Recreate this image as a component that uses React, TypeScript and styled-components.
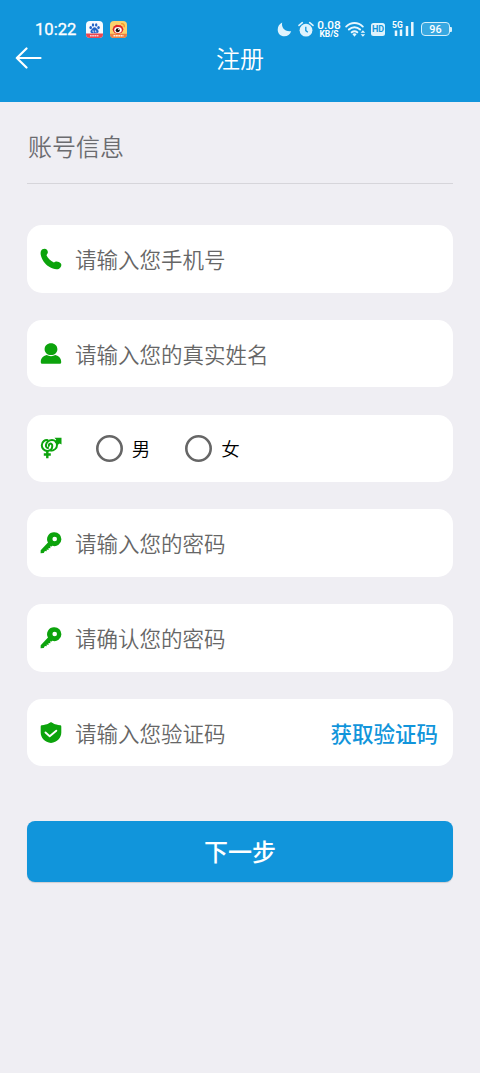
import React from "react";
import styled, { createGlobalStyle } from "styled-components";

const BLUE = "#1195db";
const GREEN = "#0ca30c";

const GlobalStyle = createGlobalStyle`
  * { box-sizing: border-box; }
  body {
    margin: 0;
    background: #efeef3;
    font-family: "Noto Sans CJK SC", sans-serif;
  }
`;

const Page = styled.div`
  min-height: 1073px;
  background: #efeef3;
`;

const Header = styled.header`
  height: 102px;
  padding-top: 18px;
  background: ${BLUE};
  color: #fff;
`;

const StatusBar = styled.div`
  display: flex;
  align-items: center;
  height: 22px;
  padding: 0 28.5px 0 35px;
`;

const Clock = styled.span`
  width: 51px;
  padding-top: 1px;
  font: 400 16.6px/23px Roboto, sans-serif;
  -webkit-text-stroke: 0.3px #fff;
  white-space: nowrap;
`;

const StatusIcon = styled.svg<{ $gap?: number }>`
  display: block;
  flex: none;
  margin-left: ${(p) => p.$gap ?? 0}px;
`;

const Spacer = styled.div`
  flex: 1;
`;

const Speed = styled.div`
  display: flex;
  flex-direction: column;
  align-items: center;
  width: 24px;
  margin-left: 3px;
  font-family: Roboto, sans-serif;
  white-space: nowrap;
  font-weight: 500;
`;

const SpeedValue = styled.span`
  margin-top: -1px;
  font-size: 11.8px;
  line-height: 12px;
`;

const SpeedUnit = styled.span`
  margin-top: -1px;
  font-size: 8.5px;
  line-height: 9px;
  font-weight: 700;
`;

const HdBadge = styled.span`
  width: 14px;
  height: 13px;
  margin-left: 5px;
  border-radius: 2.5px;
  background: #def2fc;
  color: ${BLUE};
  font: 700 9px/13px Roboto, sans-serif;
  text-align: center;
`;

const Signal = styled.div`
  display: flex;
  align-items: flex-start;
  width: 22px;
  height: 18px;
  margin-left: 7px;
`;

const SignalLabel = styled.span`
  width: 11px;
  font: 700 8.5px/10px Roboto, sans-serif;
`;

const Bars = styled.svg`
  display: block;
  flex: none;
  margin-left: -10px;
`;

const Battery = styled.div`
  display: flex;
  align-items: center;
  margin-left: 7px;
`;

const BatteryBody = styled.span`
  width: 29px;
  height: 14px;
  border: 1px solid #d5effb;
  border-radius: 4px;
  background: #38a8e1;
  font: 500 10.8px/13px Roboto, sans-serif;
  text-align: center;
`;

const BatteryTip = styled.span`
  width: 1.5px;
  height: 5px;
  background: #d5effb;
  border-radius: 0 1px 1px 0;
`;

const NavBar = styled.div`
  display: grid;
  grid-template-columns: 60px 1fr 60px;
  align-items: center;
  height: 36px;
`;

const BackButton = styled.button`
  padding: 0 0 0 15px;
  border: 0;
  background: none;
  height: 36px;
`;

const Title = styled.h1`
  margin: 0;
  font-size: 24px;
  line-height: 36px;
  font-weight: 350;
  text-align: center;
`;

const Content = styled.main`
  padding: 0 27px;
`;

const SectionTitle = styled.h2`
  height: 82px;
  margin: 0 0 41px;
  padding: 26px 0 0 1px;
  border-bottom: 1.5px solid #d6d5da;
  color: #6b6b6f;
  font-size: 24px;
  line-height: 36px;
  font-weight: 350;
`;

const Form = styled.div`
  display: flex;
  flex-direction: column;
  gap: 27.3px;
`;

const Field = styled.div`
  display: flex;
  align-items: center;
  height: 67.5px;
  padding: 0 15px 0 13px;
  border-radius: 15px;
  background: #fff;
`;

const FieldIcon = styled.svg`
  display: block;
  flex: none;
  width: 22px;
  height: 22px;
  margin-right: 13px;
`;

const Hint = styled.span`
  flex: 1;
  color: #666;
  font-size: 21.5px;
  line-height: 32px;
  font-weight: 350;
  white-space: nowrap;
`;

const CodeLink = styled.span`
  color: ${BLUE};
  font-size: 21.5px;
  line-height: 32px;
  font-weight: 500;
  white-space: nowrap;
`;

const RadioOption = styled.label`
  display: flex;
  align-items: center;
  gap: 9px;
  width: 89.5px;
  color: #000;
  font-size: 18.5px;
  line-height: 28px;
  font-weight: 350;
`;

const RadioGroup = styled.div`
  display: flex;
  padding-left: 20.8px;
`;

const RadioRing = styled.svg`
  display: block;
  width: 27px;
  height: 27px;
`;

const NextButton = styled.button`
  display: block;
  width: 100%;
  height: 61px;
  margin-top: 54.5px;
  padding: 0;
  border: 0;
  border-radius: 8px;
  background: ${BLUE};
  box-shadow: 0 1px 1px rgba(0, 0, 0, 0.14);
  color: #fff;
  font: 500 24px/36px "Noto Sans CJK SC", sans-serif;
`;

const PhoneIcon = () => (
  <FieldIcon viewBox="0 0 22 22">
    <path
      fill={GREEN}
      d="M1 3C1.800 .700 5.300 -.100 6.900 1.700C8.100 3.100 8.200 4.900 7.100 6.100L6.500 7.200C7.600 9.900 10.300 12.700 13.900 14.400L15.200 13.700C17 12.900 19.600 14 20.900 15.500C22.100 17.300 20.700 19.900 18.600 20.900C16.200 21.900 12.300 20.800 9.200 18.800C4.800 15.900 1.500 11.300 .7 6.400C.5 5.100 .6 4 1 3Z"
    />
  </FieldIcon>
);

const PersonIcon = () => (
  <FieldIcon viewBox="0 0 22 22">
    <path
      fill={GREEN}
      d="M11 .3C14.700 .3 17.400 2.900 17.400 6.200C17.400 9.500 14.600 12.100 11 12.100S4.600 9.500 4.600 6.200C4.600 2.900 7.300 .3 11 .3ZM6.600 12.100C9.300 13.500 12.700 13.500 15.400 12.100C19 13.200 21.300 15.700 21.200 18.900C21.200 20.300 20.600 20.800 19.200 20.800H2.800C1.400 20.800 .8 20.300 .8 18.900C.7 15.700 3 13.200 6.600 12.100Z"
    />
  </FieldIcon>
);

const GenderIcon = () => (
  <FieldIcon viewBox="0 0 22 22" fill="none" stroke={GREEN} strokeWidth="2">
    <path d="M8.200 3.300C5 2.300 1.800 4.800 1.800 8.300C1.800 11.500 4.300 13.900 7.300 13.900C10 13.900 12.200 12 12.300 9.100C12.400 7.300 11 6.100 9.700 6.900C8.700 7.500 8.600 8.900 9.300 9.700" />
    <path d="M10.300 13.800C14.200 13.600 17 11.200 17 7.900C17 5 14.800 3.100 12 3.100C8.900 3.100 6.200 5.400 5.900 8.300C5.800 10.200 7.300 11.500 8.900 10.700" />
    <path d="M7.300 13.800V21.200M3.800 17.500H10.800" strokeWidth="2.400" />
    <path d="M14.500 .7H21.500V7.500L19.700 6.400L17.500 8L14.500 4.900L16.200 2.800Z" fill={GREEN} stroke="none" />
  </FieldIcon>
);

const KeyIcon = () => (
  <FieldIcon viewBox="0 0 22 22">
    <path
      fill={GREEN}
      fillRule="evenodd"
      d="M14.500 .3A6.900 6.900 0 0 1 21.400 7.200A6.900 6.900 0 0 1 12.400 13.800L11.700 14.600L10.200 14.300L10.400 16.200L8.500 16L8.600 17.900L6.700 17.600L6.700 19.200L4.900 19L3.700 20.900L.6 21.200L.7 18.300L8 10.600A6.900 6.900 0 0 1 14.500 .3ZM14.700 4.700A2.300 2.300 0 1 0 14.700 9.300A2.300 2.300 0 1 0 14.700 4.700Z"
    />
  </FieldIcon>
);

const ShieldIcon = () => (
  <FieldIcon viewBox="0 0 22 22">
    <path
      fill={GREEN}
      d="M11 .3C12 .3 14.500 3 20.200 3.200Q21.300 3.300 21.300 4.500V10.500C21.300 16 17.200 20 11 21.100C4.800 20 .7 16 .7 10.500V4.500Q.7 3.300 1.800 3.200C7.500 3 10 .3 11 .3Z"
    />
    <path fill="none" stroke="#fff" strokeWidth="1.900" strokeLinecap="round" strokeLinejoin="round" d="M5.500 10.500L9.700 14.200L16.300 8.700" />
  </FieldIcon>
);

const BaiduIcon = () => (
  <StatusIcon width="17" height="17" viewBox="0 0 17 17">
    <rect width="17" height="17" rx="4" fill="#f7fbff" />
    <g fill="#2465c8">
      <ellipse cx="4.700" cy="6.600" rx="1.300" ry="1.700" />
      <ellipse cx="7" cy="3.900" rx="1.200" ry="1.600" />
      <ellipse cx="10.200" cy="3.900" rx="1.200" ry="1.600" />
      <ellipse cx="12.500" cy="6.600" rx="1.300" ry="1.700" />
      <path d="M8.600 6.300C10 6.300 10.600 7.600 11.600 8.600C13.500 10.500 12.500 12.200 11 12.200H6C4.500 12.200 3.700 10.500 5.500 8.600C6.600 7.600 7.200 6.300 8.600 6.300Z" />
    </g>
    <path d="M7 9.300V11H8.200M9.400 9.300V11H10.600" stroke="#fff" strokeWidth=".7" fill="none" />
    <path d="M0 12.400H17V13A4 4 0 0 1 13 17H4A4 4 0 0 1 0 13Z" fill="#ed4650" />
    <path d="M4 14.700H13" stroke="#fbd0d2" strokeWidth="1.500" strokeDasharray="1.700 .5" />
  </StatusIcon>
);

const WeiboIcon = () => (
  <StatusIcon $gap={7} width="17" height="17" viewBox="0 0 17 17">
    <rect width="17" height="17" rx="4" fill="#fbd16d" />
    <ellipse cx="8" cy="8.300" rx="5.300" ry="4.400" fill="#df2528" />
    <path d="M4 5.800L7 3.600L8 5L11 4.500L11.500 6.500Z" fill="#df2528" />
    <ellipse cx="8" cy="9" rx="3.800" ry="2.900" fill="#fff" />
    <circle cx="7.700" cy="9.200" r="2" fill="#171010" />
    <circle cx="8.600" cy="8.500" r=".6" fill="#fff" />
    <path d="M11.200 2.700C13.300 2.300 14.800 4 14.200 6.200" stroke="#f59a24" strokeWidth="1.400" fill="none" />
    <path d="M0 12.700H17V13A4 4 0 0 1 13 17H4A4 4 0 0 1 0 13Z" fill="#ee8044" />
    <path d="M3.500 14.700H13.500" stroke="#fff0df" strokeWidth="1.600" strokeDasharray="1.900 .5" />
  </StatusIcon>
);

const Status = () => (
  <StatusBar>
    <Clock>10:22</Clock>
    <BaiduIcon />
    <WeiboIcon />
    <Spacer />
    <StatusIcon width="15" height="15" viewBox="0 0 15 15">
      <path fill="#dff3fd" d="M5.200 .5C4 5 7.500 10.200 14.200 9.200C13 12.500 10.600 14.300 7.400 14.300C3.500 14.300 .7 11.300 .7 7.700C.7 4.300 2.500 1.700 5.200 .5Z" />
    </StatusIcon>
    <StatusIcon $gap={6} width="16" height="17" viewBox="0 0 16 17">
      <circle cx="8" cy="9.200" r="6.400" fill="#dff3fd" />
      <path d="M1 4.400L4.300 1.700M15 4.400L11.700 1.700" stroke="#dff3fd" strokeWidth="1.600" strokeLinecap="round" />
      <path d="M7.800 5.700V9.600L9.800 11.200" stroke={BLUE} strokeWidth="1.300" fill="none" />
    </StatusIcon>
    <Speed>
      <SpeedValue>0.08</SpeedValue>
      <SpeedUnit>KB/S</SpeedUnit>
    </Speed>
    <StatusIcon $gap={4} width="21" height="17" viewBox="0 0 21 17">
      <g fill="none" stroke="#e9f7fe" strokeWidth="1.900" strokeLinecap="round">
        <path d="M1.200 5.600C6 .8 13 .8 17.800 5.600M3.900 8.500C7.200 5.400 11.800 5.400 15.100 8.500M6.700 11.300C8.400 9.900 10.600 9.900 12.300 11.300" />
      </g>
      <path d="M7.300 13.100Q9.500 11.500 11.700 13.100L9.500 15.700ZM15.600 11.700L17.900 9.300L20.200 11.700ZM15.600 13.300H20.200L17.900 15.700Z" fill="#e9f7fe" />
    </StatusIcon>
    <HdBadge>HD</HdBadge>
    <Signal>
      <SignalLabel>5G</SignalLabel>
      <Bars width="21" height="18" viewBox="0 0 21 18">
        <path d="M3 10.500V16M8 9.500V16M14 6V16M19.300 2V16" stroke="#e9f7fe" strokeWidth="2.500" />
      </Bars>
    </Signal>
    <Battery>
      <BatteryBody>96</BatteryBody>
      <BatteryTip />
    </Battery>
  </StatusBar>
);

const Ring = () => (
  <RadioRing viewBox="0 0 27 27">
    <circle cx="13.500" cy="13.500" r="12.200" fill="none" stroke="#666" strokeWidth="2.600" />
  </RadioRing>
);

export default function App() {
  return (
    <Page>
      <GlobalStyle />
      <Header>
        <Status />
        <NavBar>
          <BackButton aria-label="返回">
            <svg width="27" height="22" viewBox="0 0 27 22" fill="none" stroke="#fff" strokeWidth="2.200" strokeLinecap="round" strokeLinejoin="round" display="block">
              <path d="M25.500 11H1.800M11.500 1.500L1.800 11L11.500 20.500" />
            </svg>
          </BackButton>
          <Title>注册</Title>
        </NavBar>
      </Header>
      <Content>
        <SectionTitle>账号信息</SectionTitle>
        <Form>
          <Field>
            <PhoneIcon />
            <Hint>请输入您手机号</Hint>
          </Field>
          <Field>
            <PersonIcon />
            <Hint>请输入您的真实姓名</Hint>
          </Field>
          <Field>
            <GenderIcon />
            <RadioGroup>
              <RadioOption>
                <Ring />男
              </RadioOption>
              <RadioOption>
                <Ring />女
              </RadioOption>
            </RadioGroup>
          </Field>
          <Field>
            <KeyIcon />
            <Hint>请输入您的密码</Hint>
          </Field>
          <Field>
            <KeyIcon />
            <Hint>请确认您的密码</Hint>
          </Field>
          <Field>
            <ShieldIcon />
            <Hint>请输入您验证码</Hint>
            <CodeLink>获取验证码</CodeLink>
          </Field>
        </Form>
        <NextButton>下一步</NextButton>
      </Content>
    </Page>
  );
}
